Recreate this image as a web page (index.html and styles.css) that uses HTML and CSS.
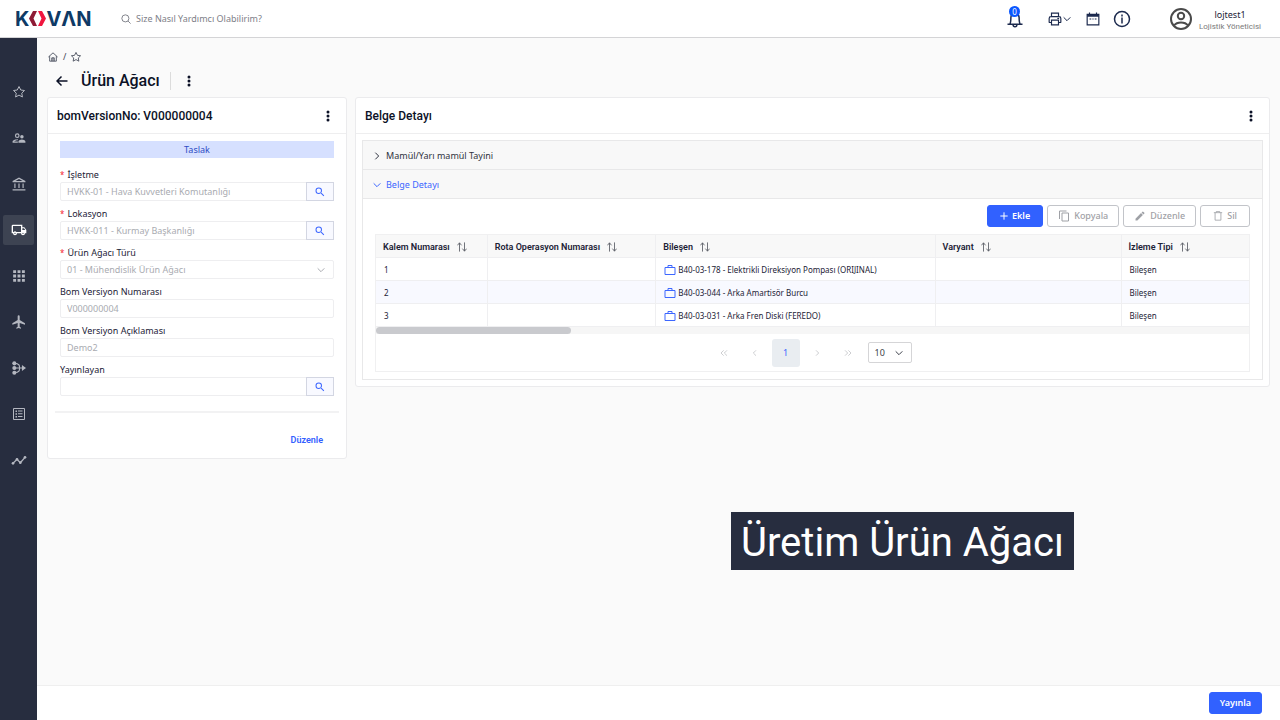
FILE: index.html
```html
<!DOCTYPE html>
<html lang="tr">
<head>
<meta charset="utf-8">
<meta name="viewport" content="width=device-width, initial-scale=1">
<title>Ürün Ağacı</title>
<link rel="stylesheet" href="styles.css">
</head>
<body>
<svg class="sprite" aria-hidden="true">
  <symbol id="search" viewBox="0 0 24 24"><path d="M15.5 14h-.79l-.28-.27A6.47 6.47 0 0 0 16 9.5 6.5 6.5 0 1 0 9.5 16c1.61 0 3.09-.59 4.23-1.57l.27.28v.79l5 4.99L20.49 19l-4.99-5zm-6 0a4.5 4.5 0 1 1 0-9 4.5 4.5 0 0 1 0 9z"/></symbol>
  <symbol id="dots" viewBox="0 0 24 24"><circle cx="12" cy="4" r="3"/><circle cx="12" cy="12" r="3"/><circle cx="12" cy="20" r="3"/></symbol>
  <symbol id="star" viewBox="0 0 24 24"><path d="m23 9-7.500-1L12 1 8.500 8 1 9l5.500 5.300L5.200 22 12 18.200 18.800 22l-1.300-7.700z" class="line"/></symbol>
  <symbol id="down" viewBox="0 0 24 24"><path d="m2 7 10 10L22 7" class="line thick"/></symbol>
  <symbol id="right" viewBox="0 0 24 24"><path d="m7 2 10 10L7 22" class="line thick"/></symbol>
  <symbol id="sort" viewBox="0 0 24 24"><path d="M6 23V2M1 8l5-6 5 6M18 1v21m-5-6 5 6 5-6" class="line"/></symbol>
  <symbol id="case" viewBox="0 0 24 24"><path d="M2 7h20v14H2zM8 7V3h8v4" class="line"/></symbol>
</svg>

<header class="topbar">
  <a class="logo" href="#" aria-label="KOVAN"><span>K</span><svg class="logo-mark" viewBox="0 0 17 15" aria-hidden="true"><path d="M4 0h4L4.500 7.500 8 15H4L0 7.500z" fill="#8e1b35"/><path d="M9 0h4l4 7.500-4 7.500H9l3.500-7.500z" fill="#f0163f"/></svg><span>VΛN</span></a>
  <div class="help">
    <svg class="i10" viewBox="0 0 24 24"><circle cx="10.500" cy="10.500" r="8.500" class="line"/><path d="m17 17 6 6" class="line"/></svg>
    <input type="text" placeholder="Size Nasıl Yardımcı Olabilirim?" aria-label="Yardım ara">
  </div>
  <div class="tools">
    <button class="bell" aria-label="Bildirimler"><svg class="i18" viewBox="0 0 24 24"><path d="M2 19h20M5 19c1.500-2 1.500-4 1.500-9a5.500 5.500 0 0 1 11 0c0 5 0 7 1.500 9M9.500 20c0 3 5 3 5 0" class="line"/></svg><span class="badge">0</span></button>
    <button class="print" aria-label="Yazdır"><svg class="i14" viewBox="0 0 24 24"><path d="M6 8V2h12v6M6 18H3a1 1 0 0 1-1-1v-6a3 3 0 0 1 3-3h14a3 3 0 0 1 3 3v6a1 1 0 0 1-1 1h-3M6 14h12v8H6z" class="line"/><path d="M16 10h3v2h-3z"/></svg><svg class="i8" viewBox="0 0 24 24"><use href="#down"/></svg></button>
    <button class="cal" aria-label="Takvim"><svg class="i14" viewBox="0 0 24 24"><path d="M2 4h20v18H2zM6 1v4M18 1v4" class="line"/><path d="M2 4h20v4H2zM6 11h3v2H6zM11 11h2v2h-2zM15 11h3v2h-3z"/></svg></button>
    <button class="info" aria-label="Bilgi"><svg class="i18" viewBox="0 0 24 24"><circle cx="12" cy="12" r="10" class="line"/><path d="M11 6h2v2.500h-2zM11 10h2v8h-2z"/></svg></button>
    <svg class="avatar" viewBox="0 0 24 24"><circle cx="12" cy="12" r="10" class="line"/><circle cx="12" cy="9" r="3.200" class="line"/><path d="M5 18.500c3-4 11-4 14 0" class="line"/></svg>
    <div class="user"><span class="user-name">lojtest1</span><span class="user-role">Lojistik Yöneticisi</span></div>
  </div>
</header>

<div class="shell">
  <nav class="sidebar" aria-label="Ana menü">
    <a href="#" aria-label="Favoriler"><svg class="i12" viewBox="0 0 24 24"><use href="#star"/></svg></a>
    <a href="#" aria-label="Kişiler"><svg class="i14" viewBox="0 0 24 24"><path d="M9 12a4 4 0 1 0 0-8 4 4 0 0 0 0 8zm0-6a2 2 0 1 1 0 4 2 2 0 0 1 0-4zm1 12H4c.2-.7 3.300-2 6-2v-2c-2.700 0-9 1.300-9 4v2h9zm7-5a3 3 0 1 0 0-6 3 3 0 0 0 0 6zm0 1.500c-2 0-6 1.200-6 3.500v2h12v-2c0-2.300-4-3.500-6-3.500z"/></svg></a>
    <a href="#" aria-label="Kurum"><svg class="i14" viewBox="0 0 24 24"><path d="M12 1 1 7v2h22V7zM6 7l6-3.500L18 7zM4 11h2v8H4zm7 0h2v8h-2zm7 0h2v8h-2zM1 21h22v2H1z"/></svg></a>
    <a href="#" class="active" aria-label="Lojistik"><svg class="i16" viewBox="0 0 24 24"><path d="M20 8h-3V4H3a2 2 0 0 0-2 2v11h2a3 3 0 0 0 6 0h6a3 3 0 0 0 6 0h2v-5l-3-4zm-.5 1.500 1.960 2.500H17V9.500h2.500zM6 18a1 1 0 1 1 0-2 1 1 0 0 1 0 2zm2.220-3a3 3 0 0 0-4.440 0H3V6h12v9H8.220zM18 18a1 1 0 1 1 0-2 1 1 0 0 1 0 2z"/></svg></a>
    <a href="#" aria-label="Modüller"><svg class="i14" viewBox="0 0 24 24"><path d="M2 2h5v5H2zm7.500 0h5v5h-5zM17 2h5v5h-5zM2 9.500h5v5H2zm7.500 0h5v5h-5zm7.500 0h5v5h-5zM2 17h5v5H2zm7.500 0h5v5h-5zm7.500 0h5v5h-5z"/></svg></a>
    <a href="#" aria-label="Uçuş"><svg class="i16" viewBox="0 0 24 24"><path d="M21 16v-2l-8-5V3.500a1.500 1.500 0 0 0-3 0V9l-8 5v2l8-2.500V19l-2 1.500V22l3.500-1 3.500 1v-1.500L13 19v-5.500l8 2.500z"/></svg></a>
    <a href="#" aria-label="Akış"><svg class="i14" viewBox="0 0 24 24"><circle cx="4" cy="4" r="3.500"/><circle cx="4" cy="12" r="3.500"/><circle cx="4" cy="20" r="3.500"/><path d="M4 4c9 0 9 4 9 8s0 8-9 8M4 12h15" class="line"/><path d="m17 7 7 5-7 5z"/></svg></a>
    <a href="#" aria-label="Listeler"><svg class="i12" viewBox="0 0 24 24"><path d="M1 1h22v22H1z" class="line"/><path d="M5 5h3v3H5zm5 0h9v2h-9zM5 10.500h3v3H5zm5 0h9v2h-9zM5 16h3v3H5zm5 0h9v2h-9z"/></svg></a>
    <a href="#" aria-label="Grafikler"><svg class="i16" viewBox="0 0 24 24"><path d="m3 17 6-6 5 5 7-8" class="line"/><circle cx="3" cy="17" r="2"/><circle cx="9" cy="11" r="2"/><circle cx="14" cy="16" r="2"/><circle cx="21" cy="8" r="2"/></svg></a>
  </nav>

  <div class="page">
    <main class="content">
      <div class="crumbs">
        <a href="#" aria-label="Ana sayfa"><svg class="i10" viewBox="0 0 24 24"><path d="M1 12 12 2l11 10M4 10v12h16V10M9 22v-8h6v8M12 14v8" class="line"/></svg></a>
        <span>/</span>
        <a href="#" aria-label="Favorilere ekle"><svg class="i10" viewBox="0 0 24 24"><use href="#star"/></svg></a>
      </div>
      <div class="title-row">
        <button aria-label="Geri"><svg class="i12" viewBox="0 0 24 24"><path d="M23 12H2M11 3l-9 9 9 9" class="line thick"/></svg></button>
        <h1>Ürün Ağacı</h1>
        <button class="title-menu" aria-label="Diğer işlemler"><svg class="i12" viewBox="0 0 24 24"><use href="#dots"/></svg></button>
      </div>

      <div class="columns">
        <section class="card side-card">
          <div class="card-head"><h2>bomVersionNo: V000000004</h2><button aria-label="Kart menüsü"><svg class="i12" viewBox="0 0 24 24"><use href="#dots"/></svg></button></div>
          <form class="fields">
            <div class="status">Taslak</div>
            <div class="field"><label class="required" for="f1">İşletme</label><div class="group"><input id="f1" type="text" value="HVKK-01 - Hava Kuvvetleri Komutanlığı" disabled><button type="button" aria-label="İşletme ara"><svg class="i12" viewBox="0 0 24 24"><use href="#search"/></svg></button></div></div>
            <div class="field"><label class="required" for="f2">Lokasyon</label><div class="group"><input id="f2" type="text" value="HVKK-011 - Kurmay Başkanlığı" disabled><button type="button" aria-label="Lokasyon ara"><svg class="i12" viewBox="0 0 24 24"><use href="#search"/></svg></button></div></div>
            <div class="field"><label class="required" for="f3">Ürün Ağacı Türü</label><div class="group select"><select id="f3" disabled><option>01 - Mühendislik Ürün Ağacı</option></select><svg class="i8" viewBox="0 0 24 24"><use href="#down"/></svg></div></div>
            <div class="field"><label for="f4">Bom Versiyon Numarası</label><div class="group"><input id="f4" type="text" value="V000000004" disabled></div></div>
            <div class="field"><label for="f5">Bom Versiyon Açıklaması</label><div class="group"><input id="f5" type="text" value="Demo2" disabled></div></div>
            <div class="field"><label for="f6">Yayınlayan</label><div class="group"><input id="f6" type="text" disabled><button type="button" aria-label="Yayınlayan ara"><svg class="i12" viewBox="0 0 24 24"><use href="#search"/></svg></button></div></div>
          </form>
          <div class="card-foot"><button>Düzenle</button></div>
        </section>

        <section class="card detail-card">
          <div class="card-head"><h2>Belge Detayı</h2><button aria-label="Belge menüsü"><svg class="i12" viewBox="0 0 24 24"><use href="#dots"/></svg></button></div>
          <div class="accordion">
            <button class="fold" aria-expanded="false"><svg class="i8" viewBox="0 0 24 24"><use href="#right"/></svg>Mamül/Yarı mamül Tayini</button>
            <button class="fold open" aria-expanded="true"><svg class="i8" viewBox="0 0 24 24"><use href="#down"/></svg>Belge Detayı</button>
            <div class="panel">
              <div class="actions">
                <button class="btn primary add"><svg class="i8" viewBox="0 0 24 24"><path d="M12 1v22M1 12h22" class="line thick"/></svg>Ekle</button>
                <button class="btn" disabled><svg class="i12" viewBox="0 0 24 24"><path d="M8 6h13v16H8zM3 18V2h14" class="line"/></svg>Kopyala</button>
                <button class="btn" disabled><svg class="i12" viewBox="0 0 24 24"><path d="M3 17.250V21h3.750L17.810 9.940l-3.750-3.750L3 17.250zM20.710 7.040a1 1 0 0 0 0-1.410l-2.340-2.340a1 1 0 0 0-1.410 0l-1.830 1.830 3.750 3.750 1.830-1.830z"/></svg>Düzenle</button>
                <button class="btn remove" disabled><svg class="i10" viewBox="0 0 24 24"><path d="M2 4h20M8 4V1h8v3M5 4v18h14V4" class="line"/></svg>Sil</button>
              </div>
              <div class="grid">
                <table>
                  <colgroup><col class="c1"><col class="c2"><col class="c3"><col class="c4"><col class="c5"></colgroup>
                  <thead><tr>
                    <th>Kalem Numarası<svg class="i10" viewBox="0 0 24 24"><use href="#sort"/></svg></th>
                    <th>Rota Operasyon Numarası<svg class="i10" viewBox="0 0 24 24"><use href="#sort"/></svg></th>
                    <th>Bileşen<svg class="i10" viewBox="0 0 24 24"><use href="#sort"/></svg></th>
                    <th>Varyant<svg class="i10" viewBox="0 0 24 24"><use href="#sort"/></svg></th>
                    <th>İzleme Tipi<svg class="i10" viewBox="0 0 24 24"><use href="#sort"/></svg></th>
                  </tr></thead>
                  <tbody>
                    <tr><td>1</td><td></td><td><div class="part"><svg class="i12" viewBox="0 0 24 24"><use href="#case"/></svg>B40-03-178 - Elektrikli Direksiyon Pompası (ORIJINAL)</div></td><td></td><td>Bileşen</td></tr>
                    <tr><td>2</td><td></td><td><div class="part"><svg class="i12" viewBox="0 0 24 24"><use href="#case"/></svg>B40-03-044 - Arka Amartisör Burcu</div></td><td></td><td>Bileşen</td></tr>
                    <tr><td>3</td><td></td><td><div class="part"><svg class="i12" viewBox="0 0 24 24"><use href="#case"/></svg>B40-03-031 - Arka Fren Diski (FEREDO)</div></td><td></td><td>Bileşen</td></tr>
                  </tbody>
                </table>
                <div class="track"><div class="thumb"></div></div>
                <div class="pager">
                  <button aria-label="İlk sayfa"><svg class="i8" viewBox="0 0 24 24"><path d="m11 4-8 8 8 8M21 4l-8 8 8 8" class="line"/></svg></button>
                  <button aria-label="Önceki sayfa"><svg class="i8" viewBox="0 0 24 24"><path d="m15 4-8 8 8 8" class="line"/></svg></button>
                  <button class="current">1</button>
                  <button aria-label="Sonraki sayfa"><svg class="i8" viewBox="0 0 24 24"><path d="m9 4 8 8-8 8" class="line"/></svg></button>
                  <button aria-label="Son sayfa"><svg class="i8" viewBox="0 0 24 24"><path d="m3 4 8 8-8 8M13 4l8 8-8 8" class="line"/></svg></button>
                  <div class="page-size"><select aria-label="Sayfa boyutu"><option>10</option></select><svg class="i8" viewBox="0 0 24 24"><use href="#down"/></svg></div>
                </div>
              </div>
            </div>
          </div>
        </section>
      </div>
    </main>
    <footer class="bottombar"><button class="btn primary publish">Yayınla</button></footer>
  </div>
</div>
<div class="caption">Üretim Ürün Ağacı</div>
</body>
</html>
```

FILE: styles.css
```css
* { box-sizing: border-box; }
body {
  margin: 0;
  min-height: 100vh;
  display: flex;
  flex-direction: column;
  position: relative;
  background: #fafafa;
  color: #1c2236;
  font: 9px/14px "Noto Sans", "Open Sans", sans-serif;
}
button, input, select { font: inherit; color: inherit; margin: 0; padding: 0; border: 0; background: none; border-radius: 0; appearance: none; }
button { display: inline-flex; align-items: center; justify-content: center; }
a { color: inherit; text-decoration: none; }
h1, h2 { margin: 0; font-family: Roboto, sans-serif; font-weight: 500; color: #0b1126; }
svg { fill: currentColor; flex: none; display: block; }
.sprite { position: absolute; width: 0; height: 0; }
.line { fill: none; stroke: currentColor; stroke-width: 2; }
.thick { stroke-width: 3; }
.i8 { width: 8px; height: 8px; }
.i10 { width: 10px; height: 10px; }
.i12 { width: 12px; height: 12px; }
.i14 { width: 14px; height: 14px; }
.i16 { width: 16px; height: 16px; }
.i18 { width: 18px; height: 18px; }

.topbar { height: 38px; flex: none; display: flex; align-items: center; padding: 0 19px 0 15px; background: #fff; border-bottom: 1px solid #d4d4d6; z-index: 1; }
.logo { display: flex; align-items: center; width: 106px; color: #0e3a66; font: 700 20px/24px Inter, sans-serif; }
.logo-mark { width: 17px; height: 15px; }
.help { display: flex; align-items: center; gap: 5px; flex: 1; color: #6b6e77; }
.help input { flex: 1; height: 20px; }
.help input::placeholder { color: #7e8088; opacity: 1; }
.tools { display: flex; align-items: center; color: #1c2a4e; }
.bell { position: relative; margin-right: 24px; }
.badge { position: absolute; left: 3px; top: -4px; width: 11px; height: 11px; border-radius: 50%; background: #0b57ff; color: #fff; font-size: 8px; line-height: 11px; text-align: center; }
.print { gap: 1px; margin-right: 15px; }
.cal { margin-right: 13px; }
.info { margin-right: 38px; }
.avatar { width: 24px; height: 24px; margin-right: 6px; color: #4a4a4a; }
.user { display: flex; flex-direction: column; align-items: center; line-height: 12px; padding-top: 4px; }
.user-name { color: #1c2236; }
.user-role { color: #7a7a7a; font-family: Roboto, sans-serif; font-size: 8px; }

.shell { flex: 1; display: flex; }
.sidebar { width: 37px; flex: none; display: flex; flex-direction: column; align-items: center; gap: 16px; padding-top: 39px; background: #272d3f; color: #b4b7c0; }
.sidebar a { width: 31px; height: 30px; display: flex; align-items: center; justify-content: center; border-radius: 2px; }
.sidebar .active { background: #3d4352; color: #fff; }
.page { flex: 1; min-width: 0; display: flex; flex-direction: column; }
.content { flex: 1; padding: 12px 10px; }
.crumbs { display: flex; align-items: center; gap: 5px; height: 14px; padding-left: 1px; color: #3e4454; }
.title-row { display: flex; align-items: center; height: 33px; padding-left: 9px; color: #0b1126; }
h1 { margin-left: 13px; font-size: 16px; line-height: 20px; }
.title-menu { height: 18px; margin-left: 10px; padding-left: 12px; border-left: 1px solid #dcdcdc; }

.columns { display: flex; align-items: flex-start; gap: 8px; }
.card { background: #fff; border: 1px solid #ebebed; border-radius: 3px; }
.side-card { width: 300px; flex: none; }
.detail-card { flex: 1; min-width: 0; }
.card-head { display: flex; align-items: center; justify-content: space-between; height: 36px; padding: 1px 12px 0 9px; border-bottom: 1px solid #eeeeef; color: #0b1126; }
h2 { font-size: 12px; line-height: 16px; }
.fields { padding: 7px 12px 0; }
.status { height: 17px; line-height: 17px; margin-bottom: 9px; background: #d6e0ff; color: #2d4cc4; text-align: center; }
.field { margin-bottom: 5px; }
.field label { display: block; height: 15px; line-height: 15px; }
.required::before { content: "*"; color: #f5222d; margin-right: 3px; font-size: 8px; }
.group { display: flex; height: 19px; border: 1px solid #eeeef0; border-radius: 2px; }
.group input, .group select { flex: 1; min-width: 0; padding: 0 6px; color: #a9abb1; opacity: 1; }
.group button { width: 28px; margin: -1px; border: 1px solid #d3d6e2; background: #f8f9ff; color: #3d67ff; }
.select { align-items: center; padding-right: 8px; color: #a9abb1; }
.card-foot { display: flex; justify-content: flex-end; margin: 15px 7px 0; padding: 17px 16px 8px; border-top: 2px solid #f2f2f3; }
.card-foot button { height: 20px; color: #3360ff; font-family: Roboto, sans-serif; font-weight: 600; }

.accordion { margin: 6px; border: 1px solid #e8e8e9; }
.fold { display: flex; width: 100%; height: 29px; justify-content: flex-start; gap: 5px; padding: 2px 0 0 10px; background: #f8f8f8; border-bottom: 1px solid #e8e8e9; color: #2f3340; }
.fold.open { color: #3d67ff; }
.panel { padding: 6px 12px 7px; }
.actions { display: flex; justify-content: flex-end; gap: 4px; margin-bottom: 7px; }
.btn { height: 22px; padding: 0 10px; gap: 4px; border: 1px solid #c2c4c9; border-radius: 3px; color: #9fa1a6; font-weight: 500; }
.btn.primary { background: #3161ff; border-color: #3161ff; color: #fff; font-weight: 600; }
.btn.add, .btn.remove { padding: 0 12px; }
.grid { border: 1px solid #f0f0f1; }
table { width: 100%; table-layout: fixed; border-collapse: separate; border-spacing: 0; }
.c1 { width: 12.8%; } .c2 { width: 19.3%; } .c3 { width: 32%; } .c4 { width: 21.3%; } .c5 { width: 14.6%; }
th, td { height: 23px; padding: 1px 8px 0; text-align: left; font-size: 8px; font-weight: 400; border-right: 1px solid #efeff1; border-bottom: 1px solid #efeff1; white-space: nowrap; }
th { padding: 1px 7px 0; background: #f8f8f8; font-family: Roboto, sans-serif; font-size: 9px; font-weight: 600; }
th:last-child, td:last-child { border-right: 0; }
th svg { display: inline-block; vertical-align: middle; margin-left: 7px; color: #555962; }
.part { display: flex; align-items: center; gap: 2px; }
.part svg { color: #3d67ff; }
tbody tr:nth-child(even) { background: #f8f9ff; }
.track { height: 7px; background: #f6f6f6; }
.thumb { width: 195px; height: 7px; border-radius: 4px; background: #c9cace; }
.pager { display: flex; align-items: center; justify-content: center; height: 37px; gap: 3px; padding-right: 4px; color: #b3b5ba; }
.pager button { width: 28px; height: 28px; border-radius: 3px; }
.pager .current { background: #e9edf1; color: #3d67ff; }
.page-size { display: flex; align-items: center; height: 21px; width: 44px; margin-left: 3px; padding: 0 8px 0 6px; border: 1px solid #d5d5d7; border-radius: 2px; color: #3b3f49; }
.page-size select { flex: 1; font-size: 9px; }

.bottombar { display: flex; align-items: center; justify-content: flex-end; height: 35px; padding: 0 18px; background: #fff; border-top: 1px solid #efefef; }
.publish { padding: 0 10px; }
.caption { position: absolute; left: 731px; top: 512px; padding: 4px 10px 0; background: #272d3f; color: #fff; font: 40px/54px Roboto, sans-serif; white-space: nowrap; }
```
